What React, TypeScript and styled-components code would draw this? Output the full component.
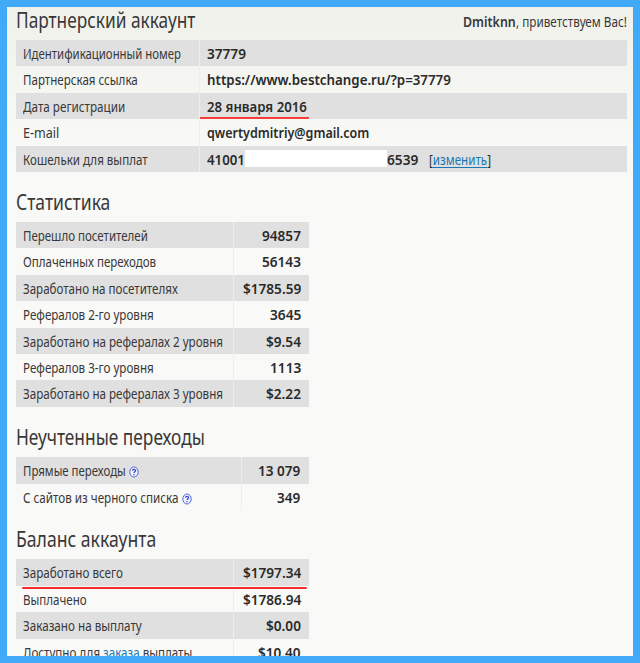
import React, { useLayoutEffect, useRef, useState } from "react";
import styled, { createGlobalStyle } from "styled-components";

const GlobalStyle = createGlobalStyle`
  * { box-sizing: border-box; }
  body { margin: 0; background: #40a9f8; }
`;

const Frame = styled.div`
  width: 640px;
  height: 663px;
  border: 7px solid #40a9f8;
  background: #40a9f8;
  overflow: hidden;
`;

const Page = styled.main`
  height: 649px;
  overflow: hidden;
  padding: 0 6px 0 9px;
  background: linear-gradient(#f1f1eb 0, #f9f9f7 150px, #f9f9f7 100%);
  font-family: "Noto Sans", "Open Sans", sans-serif;
  font-size: 15px;
  color: #383838;
`;

const TopBar = styled.header`
  display: flex;
  justify-content: space-between;
  height: 33px;
`;

const Title = styled.h2`
  margin: 0;
  font-size: 22px;
  font-weight: 400;
  line-height: 25px;
  height: 33px;
`;

const Greeting = styled.div`
  display: flex;
  line-height: 28px;
`;

const Section = styled.section<{ $gap: number }>`
  padding-top: ${(p) => p.$gap}px;
`;

const Table = styled.div<{ $wide?: boolean }>`
  width: ${(p) => (p.$wide ? "611px" : "293px")};
`;

const Row = styled.div<{ $shaded: boolean }>`
  display: flex;
  height: 26.45px;
  background: ${(p) => (p.$shaded ? "#e0e0e0" : "transparent")};
  line-height: 27px;
`;

const Label = styled.div<{ $width: number }>`
  display: flex;
  width: ${(p) => p.$width}px;
  padding-left: 7px;
  border-right: 1px solid #eeeeec;
`;

const Value = styled.div<{ $right?: boolean }>`
  position: relative;
  flex: 1;
  display: flex;
  justify-content: ${(p) => (p.$right ? "flex-end" : "flex-start")};
  padding: ${(p) => (p.$right ? "0 8.5px 0 0" : "0 0 0 7px")};
  color: #2a2a2a;
`;

const FitBox = styled.span<{ $width: number; $bold?: boolean }>`
  display: block;
  flex: none;
  width: ${(p) => p.$width}px;
  white-space: pre;
  font-weight: ${(p) => (p.$bold ? 600 : 400)};
`;

const FitText = styled.span`
  display: inline-block;
  transform-origin: 0 50%;
`;

const Link = styled.a<{ $plain?: boolean }>`
  color: #1878b4;
  text-decoration: ${(p) => (p.$plain ? "none" : "underline")};
  text-underline-offset: 2px;
`;

const Mask = styled.span`
  width: 142px;
  height: 17px;
  margin-top: 4px;
  background: #fff;
`;

const Spacer = styled.span`
  width: 11px;
`;

const HelpIcon = styled.svg`
  width: 10px;
  height: 12px;
  margin: 9px 0 0 3px;
`;

const DateMark = styled.span`
  position: absolute;
  left: 0;
  top: 24px;
  width: 109px;
  height: 2px;
  background: #f83c3c;
`;

const TotalWrap = styled.div`
  position: relative;
`;

const TotalMark = styled.span`
  position: absolute;
  left: 6px;
  top: 28px;
  width: 285px;
  height: 2px;
  border-radius: 1px;
  background: #f52c30;
`;

/* Narrows or widens its text to the given column width. */
function Fit({ width, bold, children }: { width: number; bold?: boolean; children: React.ReactNode }) {
  const ref = useRef<HTMLSpanElement>(null);
  const [scale, setScale] = useState(1);
  useLayoutEffect(() => {
    if (ref.current) setScale(width / ref.current.offsetWidth);
  }, [width]);
  return (
    <FitBox $width={width} $bold={bold}>
      <FitText ref={ref} style={{ transform: `scaleX(${scale})` }}>{children}</FitText>
    </FitBox>
  );
}

function Help() {
  return (
    <HelpIcon viewBox="0 0 10 12">
      <ellipse cx="5" cy="6" rx="4.2" ry="5" fill="#f0f3ff" stroke="#5068d8" />
      <path d="M3.5 4.8C3.5 3 6.6 3 6.6 4.7C6.6 5.8 5 5.8 5 7.1M5 8.1V9.2" fill="none" stroke="#3048c8" strokeWidth="1.2" />
    </HelpIcon>
  );
}

type Item = { label: React.ReactNode; lw: number; value: string; vw: number; help?: boolean };

const stats: Item[] = [
  { label: "Перешло посетителей", lw: 125, value: "94857", vw: 39 },
  { label: "Оплаченных переходов", lw: 133, value: "56143", vw: 39 },
  { label: "Заработано на посетителях", lw: 155, value: "$1785.59", vw: 58 },
  { label: "Рефералов 2-го уровня", lw: 131, value: "3645", vw: 31 },
  { label: "Заработано на рефералах 2 уровня", lw: 200, value: "$9.54", vw: 34.5 },
  { label: "Рефералов 3-го уровня", lw: 131, value: "1113", vw: 31 },
  { label: "Заработано на рефералах 3 уровня", lw: 200, value: "$2.22", vw: 34.5 },
];

const uncounted: Item[] = [
  { label: "Прямые переходы", lw: 103, value: "13 079", vw: 42.5, help: true },
  { label: "С сайтов из черного списка", lw: 155.5, value: "349", vw: 23.5, help: true },
];

const balance: Item[] = [
  { label: "Заработано всего", lw: 100, value: "$1797.34", vw: 58 },
  { label: "Выплачено", lw: 64, value: "$1786.94", vw: 58 },
  { label: "Заказано на выплату", lw: 119, value: "$0.00", vw: 34.5 },
  { label: <>Доступно для <Link $plain>заказа</Link> выплаты</>, lw: 169, value: "$10.40", vw: 42.5 },
];

function Figures({ items, labelWidth }: { items: Item[]; labelWidth: number }) {
  return (
    <Table>
      {items.map((it, i) => (
        <Row key={i} $shaded={i % 2 === 0}>
          <Label $width={labelWidth}>
            <Fit width={it.lw}>{it.label}</Fit>
            {it.help && <Help />}
          </Label>
          <Value $right><Fit width={it.vw} bold>{it.value}</Fit></Value>
        </Row>
      ))}
    </Table>
  );
}

export default function App() {
  return (
    <Frame>
      <GlobalStyle />
      <Page>
        <TopBar>
          <Title><Fit width={179}>Партнерский аккаунт</Fit></Title>
          <Greeting>
            <Fit width={53} bold>Dmitknn</Fit>
            <Fit width={111}>, приветствуем Вас!</Fit>
          </Greeting>
        </TopBar>
        <Table $wide>
          <Row $shaded>
            <Label $width={184}><Fit width={158}>Идентификационный номер</Fit></Label>
            <Value><Fit width={39} bold>37779</Fit></Value>
          </Row>
          <Row $shaded={false}>
            <Label $width={184}><Fit width={115}>Партнерская ссылка</Fit></Label>
            <Value><Fit width={244} bold>https://www.bestchange.ru/?p=37779</Fit></Value>
          </Row>
          <Row $shaded>
            <Label $width={184}><Fit width={102}>Дата регистрации</Fit></Label>
            <Value><Fit width={99.5} bold>28 января 2016</Fit><DateMark /></Value>
          </Row>
          <Row $shaded={false}>
            <Label $width={184}><Fit width={36}>E-mail</Fit></Label>
            <Value><Fit width={162} bold>qwertydmitriy@gmail.com</Fit></Value>
          </Row>
          <Row $shaded>
            <Label $width={184}><Fit width={125}>Кошельки для выплат</Fit></Label>
            <Value>
              <Fit width={38} bold>41001</Fit>
              <Mask />
              <Fit width={31} bold>6539</Fit>
              <Spacer />
              <Fit width={62}>[<Link>изменить</Link>]</Fit>
            </Value>
          </Row>
        </Table>
        <Section $gap={16.6}>
          <Title><Fit width={94}>Статистика</Fit></Title>
          <Figures items={stats} labelWidth={218} />
        </Section>
        <Section $gap={17.3}>
          <Title><Fit width={189}>Неучтенные переходы</Fit></Title>
          <Figures items={uncounted} labelWidth={226} />
        </Section>
        <Section $gap={16.4}>
          <Title><Fit width={140}>Баланс аккаунта</Fit></Title>
          <TotalWrap>
            <Figures items={balance} labelWidth={218} />
            <TotalMark />
          </TotalWrap>
        </Section>
      </Page>
    </Frame>
  );
}
